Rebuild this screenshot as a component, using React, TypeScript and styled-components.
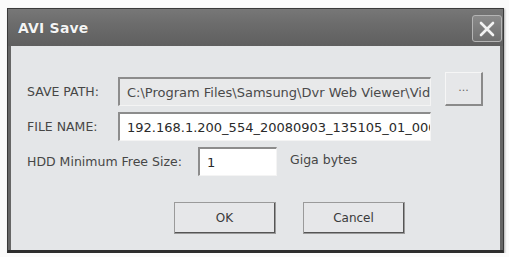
import React from "react";
import styled, { createGlobalStyle } from "styled-components";

const Global = createGlobalStyle`
  html, body { margin: 0; padding: 0; background: #fbfbfb; }
  body { font-family: Tahoma, "DejaVu Sans", sans-serif; }
`;

const Page = styled.div`
  padding: 8px 0 0 7px;
`;

const Window = styled.div`
  width: 497px;
  height: 245px;
  box-sizing: border-box;
  border: 1px solid #3a3a3a;
  border-bottom: 3px solid #2e2e2e;
  background: #666;
  display: flex;
  flex-direction: column;
  box-shadow: 1px 1px 2px rgba(0,0,0,0.3);
`;

const TitleBar = styled.div`
  height: 37px;
  display: flex;
  align-items: center;
  justify-content: space-between;
  padding: 0 1px 0 10px;
  background: linear-gradient(#777 0%, #6c6c6c 40%, #5f5f5f 100%);
`;

const Title = styled.span`
  color: #f4f4f4;
  font-family: "DejaVu Sans", sans-serif;
  font-weight: bold;
  font-size: 14px;
  letter-spacing: 0.2px;
  text-shadow: 0 0 1px rgba(0,0,0,0.4);
`;

const CloseBtn = styled.div`
  width: 30px;
  height: 27px;
  margin-top: 2px;
  box-sizing: border-box;
  border: 1px solid #b4b4b4;
  border-radius: 3px;
  background: linear-gradient(#8a8a8a, #707070);
  display: flex;
  align-items: center;
  justify-content: center;
`;

const Client = styled.div`
  flex: 1;
  margin: 0 3px 0 3px;
  background: #e4e6e8;
  display: flex;
  flex-direction: column;
  padding: 31px 0 0 16px;
  box-sizing: border-box;
`;

const Form = styled.div`
  display: grid;
  grid-template-columns: 91px 313px auto;
  grid-template-rows: 29px 29px 29px;
  row-gap: 6px;
  align-items: center;
`;

const Label = styled.span`
  font-family: "DejaVu Sans", sans-serif;
  font-size: 12.5px;
  color: #464646;
  white-space: nowrap;
`;

const Field = styled.div<{ $disabled?: boolean }>`
  height: 29px;
  box-sizing: border-box;
  border-top: 2px solid #8c8c8c;
  border-left: 2px solid #8c8c8c;
  border-right: 1px solid #f4f4f4;
  border-bottom: 1px solid #f4f4f4;
  background: ${(p) => (p.$disabled ? "#e8e9ea" : "#ffffff")};
  display: flex;
  align-items: center;
  padding-left: 7px;
  overflow: hidden;
  white-space: nowrap;
  font-family: "DejaVu Sans", sans-serif;
  font-size: 13px;
  color: ${(p) => (p.$disabled ? "#4a4a4a" : "#2a2a2a")};
`;

const BrowseBtn = styled.div`
  margin-left: 14px;
  width: 38px;
  height: 34px;
  margin-top: -5px;
  box-sizing: border-box;
  border-top: 1px solid #f6f6f6;
  border-left: 1px solid #f6f6f6;
  border-right: 2px solid #8a8a8a;
  border-bottom: 2px solid #8a8a8a;
  background: #e6e7e9;
  display: flex;
  align-items: center;
  justify-content: center;
  font-family: "DejaVu Sans", sans-serif;
  font-size: 11px;
  color: #666;
  padding-bottom: 2px;
`;

const SizeRow = styled.div`
  grid-column: 1 / span 3;
  display: flex;
  align-items: center;
`;

const SizeLabel = styled(Label)`
  width: 171px;
`;

const SizeField = styled(Field)`
  width: 79px;
`;

const Unit = styled(Label)`
  margin-left: 13px;
  margin-top: -5px;
`;

const Buttons = styled.div`
  display: flex;
  gap: 27px;
  margin-top: 26px;
  padding-left: 147px;
`;

const Button = styled.div`
  width: 102px;
  height: 32px;
  box-sizing: border-box;
  border-top: 1px solid #f6f6f6;
  border-left: 1px solid #f6f6f6;
  border-right: 2px solid #555;
  border-bottom: 2px solid #555;
  outline: 1px solid #9a9a9a;
  outline-offset: -1px;
  background: #e6e7e9;
  display: flex;
  align-items: center;
  justify-content: center;
  font-family: "DejaVu Sans", sans-serif;
  font-size: 12px;
  color: #3a3a3a;
`;

export default function App() {
  return (
    <>
      <Global />
      <Page>
        <Window>
          <TitleBar>
            <Title>AVI Save</Title>
            <CloseBtn>
              <svg width="18" height="18" viewBox="0 0 18 18">
                <path d="M3 3 L15 15 M15 3 L3 15" stroke="#f2f2f2" strokeWidth="2.6" strokeLinecap="round" />
              </svg>
            </CloseBtn>
          </TitleBar>
          <Client>
            <Form>
              <Label>SAVE PATH:</Label>
              <Field $disabled>C:\Program Files\Samsung\Dvr Web Viewer\Video</Field>
              <BrowseBtn>...</BrowseBtn>
              <Label>FILE NAME:</Label>
              <Field>192.168.1.200_554_20080903_135105_01_000.avi</Field>
              <span />
              <SizeRow>
                <SizeLabel>HDD Minimum Free Size:</SizeLabel>
                <SizeField>1</SizeField>
                <Unit>Giga bytes</Unit>
              </SizeRow>
            </Form>
            <Buttons>
              <Button>OK</Button>
              <Button>Cancel</Button>
            </Buttons>
          </Client>
        </Window>
      </Page>
    </>
  );
}
